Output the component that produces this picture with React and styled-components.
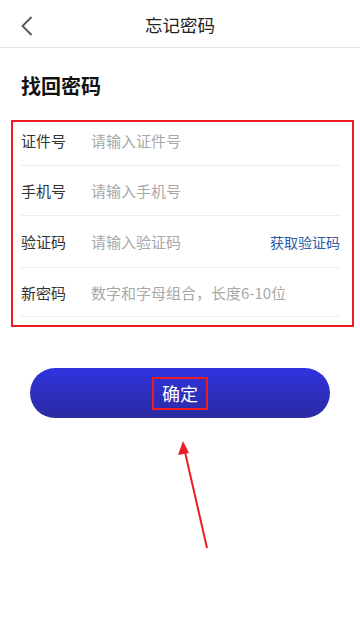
import React from 'react';
import styled, { createGlobalStyle } from 'styled-components';

const GlobalStyle = createGlobalStyle`
  html, body {
    margin: 0;
    padding: 0;
    background: #fff;
  }
  body {
    font-family: "Noto Sans CJK SC", "Noto Sans", sans-serif;
  }
`;

const Page = styled.div`
  position: relative;
  width: 360px;
  height: 619px;
  background: #fff;
  overflow: hidden;
`;

const NavBar = styled.header`
  position: relative;
  height: 48px;
  border-bottom: 1px solid #e4e4e4;
  display: flex;
  align-items: center;
  justify-content: center;
  box-sizing: border-box;
`;

const BackButton = styled.button`
  position: absolute;
  left: 14px;
  top: 13px;
  width: 26px;
  height: 26px;
  padding: 0;
  border: none;
  background: none;
  display: flex;
  align-items: center;
  justify-content: center;
`;

const NavTitle = styled.h1`
  margin: 0;
  font-size: 17.5px;
  font-weight: 400;
  color: #222;
  line-height: 1;
  transform: translateY(1px);
`;

const Heading = styled.h2`
  margin: 0;
  padding: 26px 0 0 21px;
  height: 72px;
  box-sizing: border-box;
  font-size: 20px;
  font-weight: 700;
  color: #111;
  line-height: 24px;
`;

const Form = styled.div`
  margin: 0 6px 0 11px;
  border: 2px solid #ee1c25;
  padding: 0 12px 8px 8px;
`;

const Row = styled.div`
  display: flex;
  align-items: center;
  height: ${p => p.$h || 50}px;
  border-bottom: 1px solid #ededed;
  box-sizing: border-box;
  padding-bottom: ${p => p.$pb || 0}px;
`;

const Label = styled.span`
  width: 70px;
  flex-shrink: 0;
  font-size: 15px;
  color: #333;
`;

const Field = styled.input`
  flex: 1;
  min-width: 0;
  border: none;
  outline: none;
  padding: 0;
  font-family: inherit;
  font-size: 15px;
  color: #333;
  background: transparent;
  &::placeholder {
    color: #a8a8a8;
  }
`;

const CodeLink = styled.span`
  font-size: 14px;
  color: #2a5ca8;
  white-space: nowrap;
`;

const ButtonWrap = styled.div`
  padding: 41px 30px 0;
`;

const Submit = styled.button`
  position: relative;
  width: 100%;
  height: 50px;
  border: none;
  border-radius: 25px;
  background: linear-gradient(to bottom, #3034e0, #2a2aa0);
  color: #fff;
  font-family: inherit;
  font-size: 18px;
  display: flex;
  align-items: center;
  justify-content: center;
`;

const Mark = styled.span`
  border: 2px solid #ee1c25;
  padding: 3px 8px;
  line-height: 23px;
`;

const Arrow = styled.svg`
  position: absolute;
  left: 0;
  top: 0;
  pointer-events: none;
`;

const rows = [
  { label: '证件号', ph: '请输入证件号', h: 44, pb: 6 },
  { label: '手机号', ph: '请输入手机号' },
  { label: '验证码', ph: '请输入验证码', link: '获取验证码', h: 52 },
  { label: '新密码', ph: '数字和字母组合，长度6-10位', h: 49 },
];

export default function App() {
  return (
    <Page>
      <GlobalStyle />
      <NavBar>
        <BackButton aria-label="返回">
          <svg width="14" height="20" viewBox="0 0 14 20">
            <path d="M11.5 1 L2.5 10 L11.5 19" fill="none" stroke="#555" strokeWidth="1.8" />
          </svg>
        </BackButton>
        <NavTitle>忘记密码</NavTitle>
      </NavBar>
      <Heading>找回密码</Heading>
      <Form>
        {rows.map(r => (
          <Row key={r.label} $h={r.h} $pb={r.pb}>
            <Label>{r.label}</Label>
            <Field placeholder={r.ph} />
            {r.link && <CodeLink>{r.link}</CodeLink>}
          </Row>
        ))}
      </Form>
      <ButtonWrap>
        <Submit>
          <Mark>确定</Mark>
        </Submit>
      </ButtonWrap>
      <Arrow width="360" height="619" viewBox="0 0 360 619">
        <line x1="207" y1="548" x2="185" y2="452" stroke="#ee1c25" strokeWidth="2" />
        <polygon points="183,441 178,455 189,453" fill="#ee1c25" />
      </Arrow>
    </Page>
  );
}
